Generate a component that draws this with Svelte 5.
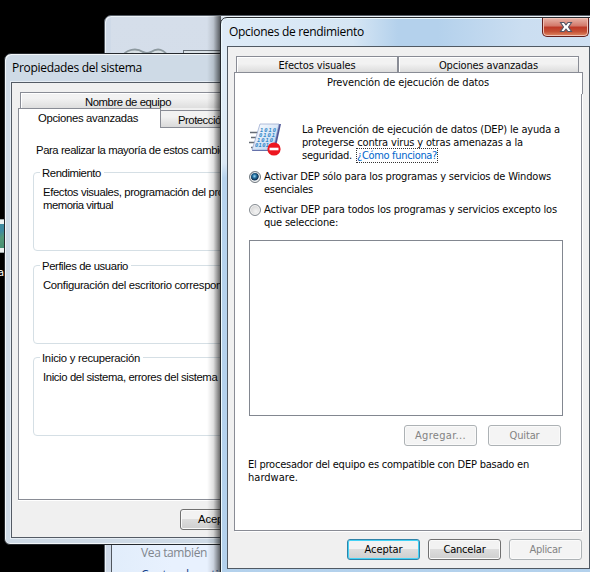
<script>
  // Spaces the letters so that a label takes exactly its native dialog width.
  function fit(node, width) {
    const natural = node.getBoundingClientRect().width;
    node.style.letterSpacing = `${(width - natural) / node.textContent.length}px`;
  }
  const groups = [
    { title: 'Rendimiento', tw: 59, lines: [['Efectos visuales, programación del procesador, uso de', 255], ['memoria virtual', 70]] },
    { title: 'Perfiles de usuario', tw: 86, lines: [['Configuración del escritorio correspondiente al inicio', 246]] },
    { title: 'Inicio y recuperación', tw: 98, lines: [['Inicio del sistema, errores del sistema e información', 240]] }
  ];
</script>

{#snippet line(text, width)}<span class="line" use:fit={width}>{text}</span>{/snippet}

<main class="desktop">
  <div class="thumb"></div>
  <div class="caption">a</div>

  <section class="panel-window">
    <div class="glass">
      <svg class="nav" width="56" height="20" viewBox="0 0 56 20"><path d="M3 12C9 1 20 1 26 5Q30 7 34 5C40 1 47 1 53 12" fill="#d8e0e4" stroke="#8d999f" stroke-width="2"/><path d="M6 13Q15 1 24 12M32 12Q42 1 50 13" fill="none" stroke="#b4bfc4" stroke-width="2"/></svg>
      <div class="address"></div>
    </div>
    <div class="side">
      <div class="see">{@render line('Vea también', 66)}</div>
      <div class="center">{@render line('Centro de actividades', 120)}</div>
    </div>
  </section>

  <section class="window system">
    <header class="title">{@render line('Propiedades del sistema', 130)}</header>
    <div class="client">
      <div class="back-tab"><span>{@render line('Nombre de equipo', 86)}</span></div>
      <div class="tab-row">
        <div class="current">{@render line('Opciones avanzadas', 100)}</div>
        <div class="other">{@render line('Protección del sistema', 103)}</div>
      </div>
      <div class="page">
        <div class="intro">{@render line('Para realizar la mayoría de estos cambios, inicie', 223)}</div>
        {#each groups as g}
          <div class="group">
            <div class="legend">{@render line(g.title, g.tw)}</div>
            {#each g.lines as l}<div class="row">{@render line(l[0], l[1])}</div>{/each}
          </div>
        {/each}
      </div>
      <div class="ok"><button class="btn">{@render line('Aceptar', 38)}</button></div>
    </div>
  </section>

  <div class="shadow"></div>
  <section class="window perf">
    <header class="title">
      {@render line('Opciones de rendimiento', 135)}
      <div class="close">
        <svg width="14" height="12" viewBox="0 0 14 12"><path d="M1.500 1.500H5L7 3.800 9 1.500H12.500L9.500 6L12.500 10.500H9L7 8.200 5 10.500H1.500L4.500 6Z" fill="#fff" stroke="#535666" stroke-width="1.100"/></svg>
      </div>
    </header>
    <div class="client">
      <div class="tabs">
        <div class="tab">{@render line('Efectos visuales', 77)}</div>
        <div class="tab second">{@render line('Opciones avanzadas', 99)}</div>
      </div>
      <div class="active">{@render line('Prevención de ejecución de datos', 162)}</div>
      <div class="page">
        <div class="info">
          <svg width="36" height="36" viewBox="0 0 36 36">
            <defs><linearGradient id="sheet" x1="0" y1="0" x2="1" y2="1"><stop offset="0" stop-color="#fff"/><stop offset="1" stop-color="#b4d0f0"/></linearGradient></defs>
            <path d="M1 9.500H9M2 14.500H7M0 19.500H6M2 24.500H5" stroke="#666c75" stroke-width="1.300"/>
            <path d="M12 1.500L32 1 26 28 3 28Z" fill="#4e5798"/>
            <path d="M11 1L30 1 24 27 3 27Z" fill="url(#sheet)" stroke="#93a3cc" stroke-width=".7"/>
            <g class="bits"><text x="11" y="9" textLength="16">1010</text><text x="10" y="14" textLength="16">0101</text><text x="8" y="19" textLength="16">1010</text><text x="6" y="24" textLength="14">0101</text></g>
            <circle cx="25" cy="26" r="6.600" fill="#ed1620"/><path d="M20.500 26H29.500" stroke="#fff" stroke-width="2.600"/>
          </svg>
          <div class="copy">
            <div>{@render line('La Prevención de ejecución de datos (DEP) le ayuda a', 258)}</div>
            <div>{@render line('protegerse contra virus y otras amenazas a la', 221)}</div>
            <div>{@render line('seguridad.', 50)}<a href="#dep">{@render line('¿Cómo funciona?', 80)}</a></div>
          </div>
        </div>
        <div class="choice">
          <i class="radio on"></i>
          <div><div>{@render line('Activar DEP sólo para los programas y servicios de Windows', 287)}</div><div>{@render line('esenciales', 49)}</div></div>
        </div>
        <div class="choice next">
          <i class="radio"></i>
          <div><div>{@render line('Activar DEP para todos los programas y servicios excepto los', 293)}</div><div>{@render line('que seleccione:', 74)}</div></div>
        </div>
        <div class="list"></div>
        <div class="actions">
          <button class="btn off">{@render line('Agregar...', 51)}</button>
          <button class="btn off">{@render line('Quitar', 30)}</button>
        </div>
        <div class="note"><div>{@render line('El procesador del equipo es compatible con DEP basado en', 281)}</div><div>{@render line('hardware.', 50)}</div></div>
      </div>
      <footer>
        <button class="btn default">{@render line('Aceptar', 38)}</button>
        <button class="btn">{@render line('Cancelar', 42)}</button>
        <button class="btn off">{@render line('Aplicar', 32)}</button>
      </footer>
    </div>
  </section>
</main>

<style>
  :global(body) { margin: 0; background: #000; }
  .desktop, .desktop * { box-sizing: border-box; }
  .desktop { position: relative; width: 590px; height: 572px; overflow: hidden; background: #000; color: #080808; font: 11px/13px "DejaVu Sans Condensed", "DejaVu Sans", sans-serif; }
  .line { display: inline-block; white-space: pre; }
  .thumb { position: absolute; left: -20px; top: 219px; width: 24px; height: 34px; border: 1px solid #9fa9aa; background: linear-gradient(155deg, #408ba0 45%, #549978 60%, #3d8a70); box-shadow: inset 0 0 0 4px #eef2f2; border-right: 0; clip-path: inset(0); background-clip: padding-box; width: 30px; }
  .caption { position: absolute; left: -2px; top: 266px; color: #fff; }

  .panel-window { position: absolute; left: 104px; top: 15px; width: 500px; height: 570px; border: 1px solid #555c65; border-radius: 7px 0 0 0; background: #cfdae8; padding-left: 6px; box-shadow: inset 1px 1px #edf3f8; }
  .glass { height: 528px; display: flex; align-items: flex-start; padding: 30px 0 0 4px; background: linear-gradient(#d5deea, #cfdae7); margin-top: 1px; }
  .nav { margin-left: 2px; }
  .address { margin: 3px 0 0 10px; width: 200px; height: 20px; border: 1px solid #666e76; background: #dce4e9; }
  .side { border-left: 1px solid #50565e; height: 40px; padding: 0 0 0 29px; background: linear-gradient(90deg, #e1edfb, #e8f1fe 60px); font: 12px/15px "Open Sans", sans-serif; color: #80868d; }
  .center { margin-top: 7px; color: #14408a; }

  .window { position: absolute; border: 1px solid #25292e; border-radius: 7px 7px 6px 6px; }
  .title { font: 12px/16px "Open Sans", "Noto Sans", sans-serif; color: #000; }
  .client { background: #f0f0f0; }
  .system { left: 4px; top: 53px; width: 400px; height: 492px; padding: 0 6px; background: #cedae6; box-shadow: inset 1px 1px #f2f6f9, inset -1px -1px #f2f6f9; font: 11.3px/13px "Liberation Sans", Arial, sans-serif; }
  .system .title { height: 28px; padding: 6px 0 0 1px; }
  .system .client { height: 456px; border: 1px solid #545b65; box-shadow: 0 0 0 1px #e6edf4; padding: 9px 0 0 6px; }
  .back-tab { margin-left: 2px; height: 16px; border: solid #898c95; border-width: 1px 0 0 1px; box-shadow: inset 1px 1px #fff; background: linear-gradient(#f2f2f2 35%, #dedede); padding: 3px 0 0 64px; }
  .tab-row { height: 20px; display: flex; }
  .current { width: 143px; flex: none; background: #fff; border: solid #898c95; border-width: 1px 1px 0; padding: 3px 0 0 19px; height: 20px; }
  .other { margin-top: 2px; height: 18px; width: 240px; border: solid #898c95; border-width: 1px 0; background: linear-gradient(#f2f2f2 35%, #d9d9d9); padding: 3px 0 0 17px; }
  .system .page { height: 372px; border: solid #898c95; border-width: 0 0 1px 1px; background: #fff; padding: 16px 0 0 14px; box-shadow: 0 1px #fff; }
  .intro { padding-left: 3px; height: 28px; }
  .group { height: 79px; margin-bottom: 14px; border: 1px solid #d5dfe5; border-radius: 4px; }
  .group + .group { height: 79px; margin-bottom: 13px; }
  .legend { width: max-content; background: #fff; padding: 0 3px 0 2px; margin: -6px 0 0 6px; height: 18px; }
  .legend + .row { margin-top: 1px; }
  .row { padding-left: 9px; }
  .ok { padding: 9px 0 0 162px; }
  .ok .btn { padding-left: 17px; justify-content: flex-start; }

  .shadow { position: absolute; left: 207px; top: 16px; width: 14px; height: 556px; background: linear-gradient(90deg, transparent, rgba(0,0,0,.12) 45%, rgba(0,0,0,.65)); }
  .perf { left: 220px; top: 17px; width: 371px; height: 580px; padding-left: 6px; background: linear-gradient(#e2eff9 0, #dce9f5 145px, #b7d3ee 160px, #b3d1ec); box-shadow: inset 1px 1px #edfaff; border-radius: 7px 0 0 0; }
  .perf .title { height: 28px; display: flex; align-items: flex-start; background: linear-gradient(90deg, #deebf7, #d6e6f4 130px, #b4d1ec 175px, #b4d1ec 215px, #cbdef1 300px, #cfe0f2); margin: 1px 0 0 -4px; padding: 5px 0 0 6px; }
  .close { margin: -6px 1px 0 auto; width: 47px; height: 19px; border: 1px solid #641f1c; border-top: 0; border-radius: 0 0 5px 5px; background: linear-gradient(#e8b4a9, #d27768 45%, #bd3726 50%, #c45035 75%, #e08b65); box-shadow: inset 0 0 0 1px #f1c0b4; display: flex; justify-content: center; align-items: center; }
  .perf .client { height: 523px; width: 363px; border: 1px solid #505963; padding: 9px 6px 0; margin-top: -1px; position: relative; top: 0; }
  .tabs { display: flex; margin-left: 2px; width: 343px; }
  .tab { width: 162px; height: 16px; border: solid #898c95; border-width: 1px 1px 0; box-shadow: inset 1px 1px #fff; background: linear-gradient(#f2f2f2 45%, #dcdcdc); display: flex; justify-content: center; padding-top: 2px; }
  .second { width: 181px; }
  .active { width: 349px; height: 22px; background: #fff; border: solid #898c95; border-width: 1px 1px 0; padding-top: 3px; display: flex; padding-left: 92px; }
  .perf .page { width: 348px; height: 437px; background: #fff; border: solid #898c95; border-width: 0 1px 1px; box-shadow: 1px 1px #fff; padding: 29px 0 0 14px; }
  .info { display: flex; height: 47px; }
  .copy { margin-left: 17px; }
  .bits { font: bold italic 5.5px "DejaVu Sans Mono", monospace; fill: #3489c8; }
  a { color: #0066cc; text-decoration: underline; display: inline-block; height: 13px; outline: 1px dotted #333; outline-offset: 0; margin-left: 5px; vertical-align: top; }
  .choice { display: flex; height: 33px; }
  .radio { width: 12px; height: 12px; border: 1px solid #858b91; border-radius: 50%; margin: 1px 3px 0 0; background: radial-gradient(circle at 60% 65%, #f4f4f4, #c8c8c8); box-shadow: inset 0 0 0 1px #f5f5f5; }
  .on { background: radial-gradient(circle at 45% 42%, #9edbf5, #236e9e 25%, #112f50 48%, #d7dde1 58%); border-color: #717980; }
  .list { width: 314px; height: 176px; border: 1px solid #828790; margin-top: 4px; }
  .actions { margin: 9px 0 0 155px; display: flex; gap: 11px; }
  .btn { width: 73px; height: 21px; margin: 0; padding: 0 0 1px; border: 1px solid #707070; border-radius: 3px; background: linear-gradient(#f2f2f2 48%, #dddddd 50%, #cfcfcf); box-shadow: inset 0 0 0 1px #fafafa; color: #000; font: inherit; display: flex; align-items: center; justify-content: center; }
  .off { color: #838383; background: #f4f4f4; border-color: #adb2b5; }
  .default { border-color: #2f83a8; box-shadow: inset 0 0 0 1px #43d2f6; }
  .note { margin: 12px 0 0 -1px; }
  footer { display: flex; gap: 8px; padding: 8px 0 0 113px; }
</style>
